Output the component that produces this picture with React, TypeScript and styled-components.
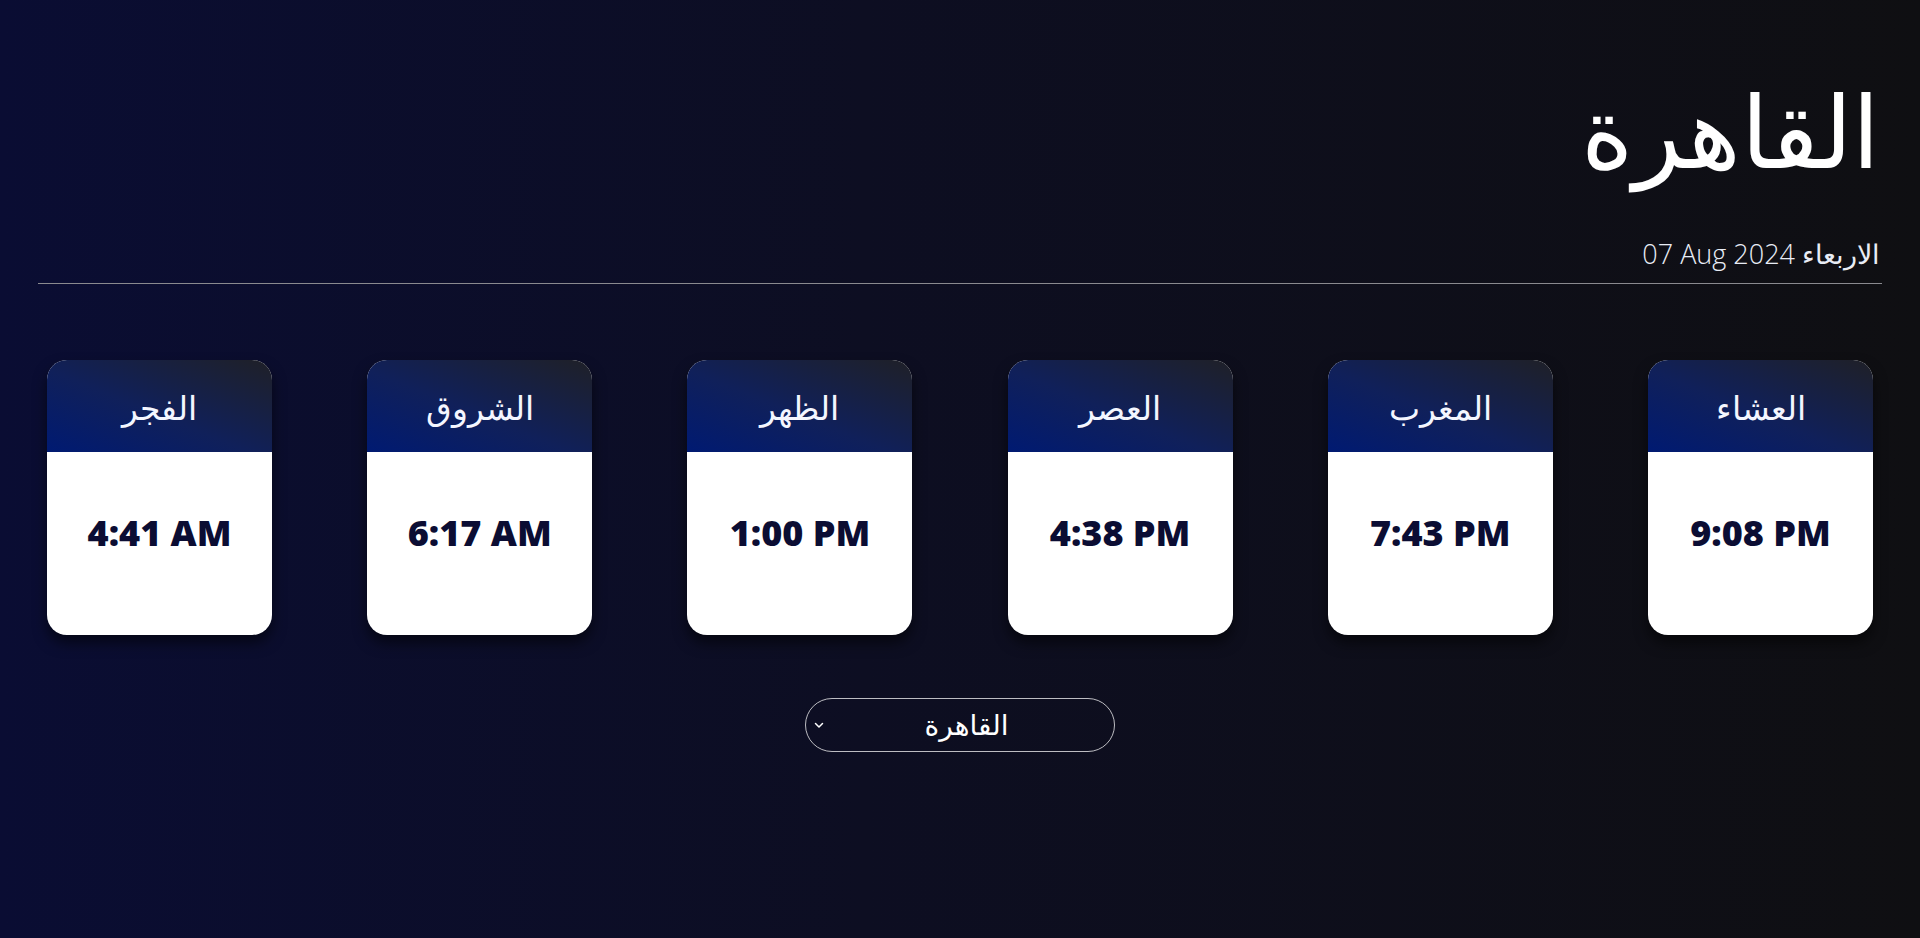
import * as React from "react";
import styled, { createGlobalStyle } from "styled-components";

const GlobalStyle = createGlobalStyle`
  html, body {
    margin: 0;
    padding: 0;
  }
  body {
    font-family: "DejaVu Sans", "Open Sans", sans-serif;
    background: #0f0f12;
  }
`;

const Page = styled.div`
  direction: rtl;
  min-height: 938px;
  box-sizing: border-box;
  padding: 0 38px;
  background: linear-gradient(to right, #0a0d33 0%, #0d0e22 45%, #0f0f12 100%);
  color: white;
  display: flex;
  flex-direction: column;
`;

const Header = styled.header`
  display: flex;
  flex-direction: column;
  align-items: flex-start;
  padding: 0 2px;
  border-bottom: 1.5px solid #8a8a8f;
`;

const City = styled.h1`
  margin: 74px 0 0;
  font-size: 100px;
  font-weight: 300;
  line-height: 1.2;
`;

const DateLine = styled.div`
  margin: 44px 0 13px;
  font-family: "Open Sans", "DejaVu Sans", sans-serif;
  font-size: 27px;
  font-weight: 300;
  color: #e8ecf5;
  line-height: 1.2;
`;

const Latin = styled.span`
  direction: ltr;
  unicode-bidi: isolate;
`;

const Cards = styled.div`
  display: flex;
  justify-content: space-between;
  padding: 0 9px;
  margin-top: 76px;
`;

const Card = styled.div`
  width: 225px;
  height: 275px;
  border-radius: 20px;
  overflow: hidden;
  background: white;
  box-shadow: 0 8px 14px rgba(0, 0, 0, 0.55);
  display: flex;
  flex-direction: column;
`;

const CardHead = styled.div`
  height: 92px;
  background: linear-gradient(to top right, #001a72 0%, #10205a 45%, #1f2027 100%);
  display: flex;
  align-items: center;
  justify-content: center;
  padding-top: 4px;
  box-sizing: border-box;
  font-size: 33px;
  font-weight: 200;
  color: #f4f6ff;
`;

const CardTime = styled.div`
  flex: 1;
  display: flex;
  align-items: center;
  justify-content: center;
  direction: ltr;
  font-family: "Open Sans", "Liberation Sans", sans-serif;
  font-size: 36px;
  font-weight: 800;
  color: #0b0d33;
  padding-bottom: 22px;
`;

const SelectBox = styled.div`
  align-self: center;
  margin-top: 63px;
  width: 310px;
  height: 54px;
  box-sizing: border-box;
  border: 1.5px solid #bdbdc2;
  border-radius: 27px;
  display: flex;
  align-items: center;
  padding: 0 6px 0 7px;
  direction: ltr;
`;

const Chevron = styled.svg`
  width: 12px;
  height: 12px;
  flex: none;
`;

const SelectText = styled.span`
  flex: 1;
  text-align: center;
  direction: rtl;
  font-size: 28px;
  font-weight: 400;
  color: white;
`;

const prayers = [
  { name: "الفجر", time: "4:41 AM" },
  { name: "الشروق", time: "6:17 AM" },
  { name: "الظهر", time: "1:00 PM" },
  { name: "العصر", time: "4:38 PM" },
  { name: "المغرب", time: "7:43 PM" },
  { name: "العشاء", time: "9:08 PM" },
];

export default function App() {
  return (
    <>
      <GlobalStyle />
      <Page>
        <Header>
          <City>القاهرة</City>
          <DateLine>
            الاربعاء <Latin>07 Aug 2024</Latin>
          </DateLine>
        </Header>
        <Cards>
          {[...prayers].reverse().map((p) => (
            <Card key={p.name}>
              <CardHead>{p.name}</CardHead>
              <CardTime>{p.time}</CardTime>
            </Card>
          ))}
        </Cards>
        <SelectBox>
          <Chevron viewBox="0 0 12 12">
            <path d="M2.5 4.5 L6 8 L9.5 4.5" fill="none" stroke="white" strokeWidth="1.5" strokeLinecap="round" strokeLinejoin="round" />
          </Chevron>
          <SelectText>القاهرة</SelectText>
        </SelectBox>
      </Page>
    </>
  );
}
